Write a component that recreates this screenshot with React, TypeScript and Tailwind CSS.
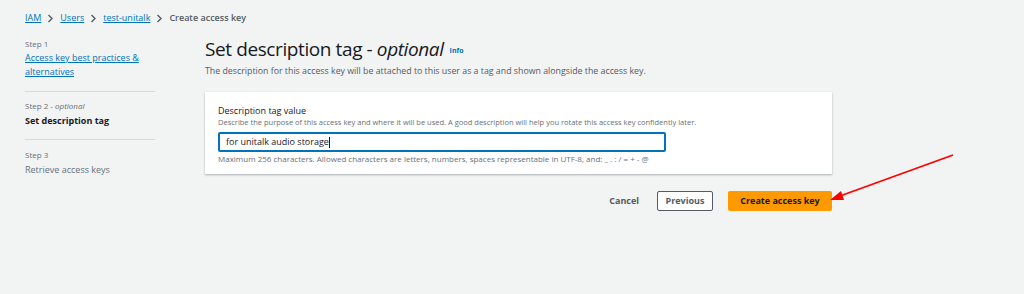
import React from 'react'

const font = { fontFamily: '"Open Sans", "Noto Sans", Arial, sans-serif' }

function Breadcrumb() {
  const Sep = () => (
    <svg width="7" height="9" viewBox="0 0 7 9" className="mx-[6px]">
      <path d="M1.5 1 L5 4.5 L1.5 8" fill="none" stroke="#545b64" strokeWidth="1.4" />
    </svg>
  )
  return (
    <div className="flex items-center h-[36px] text-[9px] pl-[25px]">
      <a className="text-[#0073bb] underline">IAM</a>
      <Sep />
      <a className="text-[#0073bb] underline">Users</a>
      <Sep />
      <a className="text-[#0073bb] underline">test-unitalk</a>
      <Sep />
      <span className="text-[#545b64] font-semibold">Create access key</span>
    </div>
  )
}

function Steps() {
  return (
    <div className="w-[130px] shrink-0 text-[9px]">
      <div className="pt-[2px] pb-[12px]">
        <div className="text-[8px] text-[#687078] leading-[12px]">Step 1</div>
        <a className="text-[#0073bb] underline leading-[14px] block mt-[1px]">
          Access key best practices &amp; alternatives
        </a>
      </div>
      <div className="border-t border-[#d5dbdb] pt-[8px] pb-[11px]">
        <div className="text-[8px] text-[#687078] leading-[12px]">
          Step 2 - <i>optional</i>
        </div>
        <div className="font-bold text-[#16191f] leading-[14px] mt-[2px]">Set description tag</div>
      </div>
      <div className="border-t border-[#d5dbdb] pt-[9px]">
        <div className="text-[8px] text-[#687078] leading-[12px]">Step 3</div>
        <div className="text-[#687078] leading-[14px] mt-[2px]">Retrieve access keys</div>
      </div>
    </div>
  )
}

export default function App() {
  return (
    <div className="w-[1024px] h-[294px] bg-[#f2f3f3] relative overflow-hidden" style={font}>
      <Breadcrumb />
      <div className="flex pl-[25px] gap-[50px]">
        <Steps />
        <div className="w-[627px]">
          <div className="flex items-center gap-[6px] mt-[1px]">
            <h1 className="text-[19px] leading-[24px] tracking-[-0.4px] text-[#16191f]">
              Set description tag - <i>optional</i>
            </h1>
            <span className="text-[7px] font-bold text-[#0073bb] mt-[4px]">Info</span>
          </div>
          <p className="text-[8.8px] text-[#545b64] leading-[12px] mt-[4px]">
            The description for this access key will be attached to this user as a tag and shown alongside the access key.
          </p>
          <div className="bg-white mt-[15px] shadow-[0_1px_2px_rgba(0,28,36,0.3)] px-[13px] pt-[13px] pb-[10px]">
            <div className="text-[9px] text-[#16191f] leading-[12px]">Description tag value</div>
            <div className="text-[7.5px] text-[#687078] leading-[10px]">
              Describe the purpose of this access key and where it will be used. A good description will help you rotate this access key confidently later.
            </div>
            <div className="w-[448px] h-[20px] mt-[5px] border-2 border-[#0073bb] rounded-[2px] flex items-center px-[6px] text-[9px] text-[#16191f]">
              for unitalk audio storage<span className="w-px h-[11px] bg-[#16191f]" />
            </div>
            <div className="text-[8px] text-[#687078] leading-[10px] mt-[2px]">
              Maximum 256 characters. Allowed characters are letters, numbers, spaces representable in UTF-8, and: _ . : / = + - @
            </div>
          </div>
          <div className="flex justify-end items-center mt-[17px] text-[9px] font-bold">
            <button className="text-[#545b64] mr-[18px]">Cancel</button>
            <button className="w-[56px] h-[20px] bg-white border border-[#545b64] text-[#545b64] rounded-[2px]">Previous</button>
            <button className="w-[104px] h-[20px] ml-[15px] bg-[#ff9900] text-[#16191f] rounded-[2px]">Create access key</button>
          </div>
        </div>
      </div>
      <svg className="absolute left-0 top-0" width="1024" height="294" viewBox="0 0 1024 294">
        <line x1="953" y1="155" x2="840" y2="196" stroke="#ff0000" strokeWidth="1.8" />
        <polygon points="830,200 841,191 844,200" fill="#ff0000" />
      </svg>
    </div>
  )
}
